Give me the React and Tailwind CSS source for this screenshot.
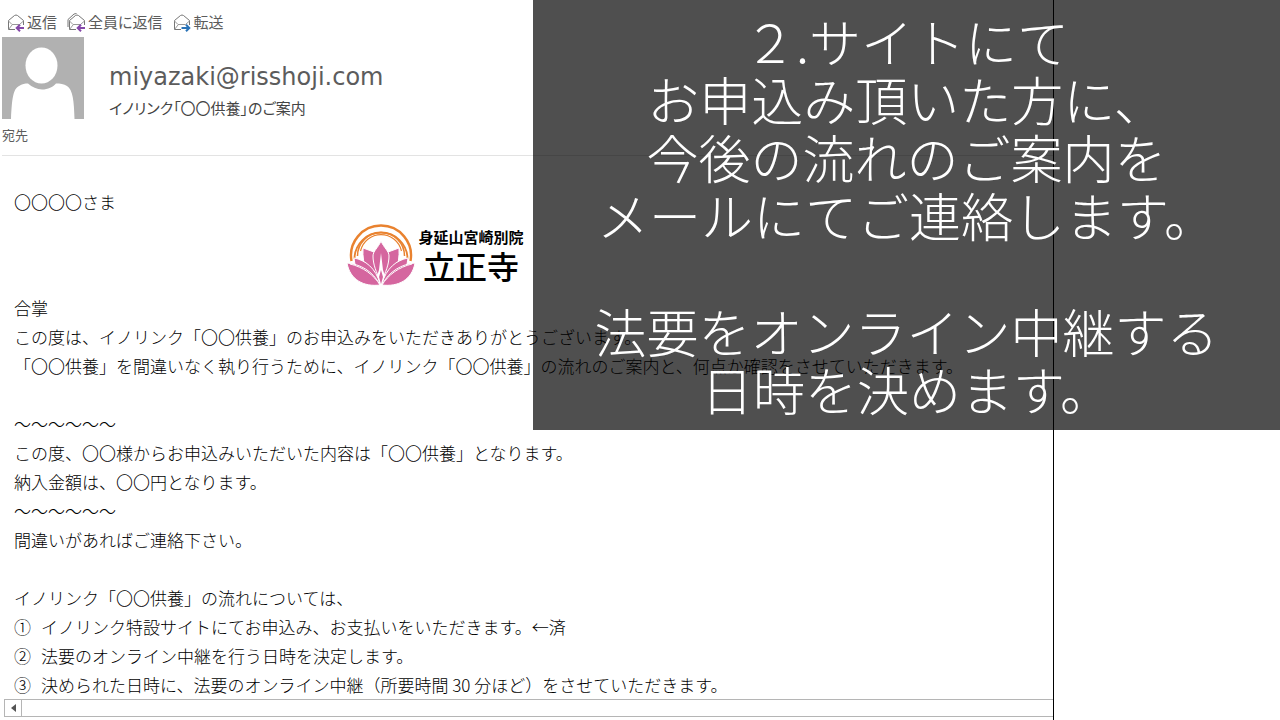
import clsx from 'clsx';

const captionLines = [
    '２.サイトにて',
    'お申込み頂いた方に、',
    '今後の流れのご案内を',
    'メールにてご連絡します。',
    '',
    '法要をオンライン中継する',
    '日時を決めます。',
];

const bodyLines = [
    '合掌',
    'この度は、イノリンク「〇〇供養」のお申込みをいただきありがとうございます。',
    '「〇〇供養」を間違いなく執り行うために、イノリンク「〇〇供養」の流れのご案内と、何点か確認をさせていただきます。',
    '',
    '～～～～～～',
    'この度、〇〇様からお申込みいただいた内容は「〇〇供養」となります。',
    '納入金額は、〇〇円となります。',
    '～～～～～～',
    '間違いがあればご連絡下さい。',
    '',
    'イノリンク「〇〇供養」の流れについては、',
];

const steps = [
    { mark: '①', text: 'イノリンク特設サイトにてお申込み、お支払いをいただきます。←済' },
    { mark: '②', text: '法要のオンライン中継を行う日時を決定します。' },
    { mark: '③', text: '決められた日時に、法要のオンライン中継（所要時間 30 分ほど）をさせていただきます。' },
];

export default function App() {
    return (
        <div className="relative min-h-screen overflow-hidden bg-white font-['Noto_Sans_CJK_JP',sans-serif]">
            <main className="flex min-h-screen w-[82.35%] flex-col border-r border-black">
                <MailHeader />
                <MailBody />
                <ScrollBar />
            </main>
            <Caption />
        </div>
    );
}

function MailHeader() {
    return (
        <header className="ml-0.5 border-b border-[#e3e3e3] pt-3 text-[#5c5c5c]">
            <nav className="flex h-5 items-center gap-2.5 pl-1">
                <MailAction label="返信" kind="reply" />
                <MailAction label="全員に返信" kind="replyAll" />
                <MailAction label="転送" kind="forward" />
            </nav>
            <div className="mt-[5px] flex items-start gap-[25px]">
                <Avatar />
                <div className="pt-6">
                    <h1 className="font-['DejaVu_Sans',sans-serif] text-[24px] leading-8">miyazaki@risshoji.com</h1>
                    <p className="text-[15px] leading-[30px] text-[#444] [font-feature-settings:'palt']">
                        イノリンク「〇〇供養」のご案内
                    </p>
                </div>
            </div>
            <p className="pb-2 text-[13px] leading-6">宛先</p>
        </header>
    );
}

function MailAction({ label, kind }) {
    return (
        <button type="button" className="flex items-center gap-0.5 text-[15px] leading-5 [font-feature-settings:'palt']">
            <EnvelopeIcon kind={kind} />
            {label}
        </button>
    );
}

function EnvelopeIcon({ kind }) {
    return (
        <svg width="19" height="20" viewBox="0 0 19 20" fill="none" aria-hidden="true">
            {kind === 'replyAll' && <path d="M1 15V7.500L7 2L9.500 1.500" stroke="#777" />}
            <path d="M9 17.500H2.500V8.500L8.500 3.500Q10 2.500 11.500 3.500L17.500 8.500V13" stroke="#777" />
            <path d="M2.500 9L6 12.500H13.500L17.500 9" stroke="#999" />
            <path d="M2.500 17.500L6 13" stroke="#999" />
            <path
                d={kind === 'forward' ? 'M9.5 16H17M14 12.7L17.3 16L14 19.3' : 'M18 16H11M14 12.7L10.7 16L14 19.3'}
                stroke={kind === 'forward' ? '#2b74b8' : '#8548a8'}
                strokeWidth="2"
            />
        </svg>
    );
}

function Avatar() {
    return (
        <svg width="82" height="82" viewBox="0 0 82 82" aria-hidden="true">
            <rect width="82" height="82" fill="#b1b1b1" />
            <ellipse cx="39.5" cy="28.5" rx="16" ry="18" fill="#fff" />
            <path d="M9 82C10 62 11 52 17 49C20 47 23 46.500 26 46.500C30 50 35 52.500 40 52.500C46 52.500 51 50 54 46.500C58 46.500 62 47 65 49C71 53 72 64 72.500 82Z" fill="#fff" />
        </svg>
    );
}

function MailBody() {
    return (
        <article className="pt-[31px] pl-3.5 text-[17px] leading-[29px] font-light whitespace-nowrap text-black">
            <p>〇〇〇〇さま</p>
            <TempleLogo />
            {bodyLines.map((line, idx) => (
                <p key={idx} className="h-[29px]">{line}</p>
            ))}
            <ol>
                {steps.map((step) => (
                    <li key={step.mark} className="flex gap-2.5">
                        <span>{step.mark}</span>
                        <span>{step.text}</span>
                    </li>
                ))}
            </ol>
        </article>
    );
}

function TempleLogo() {
    return (
        <div className="flex h-[77px] w-[842px] items-center justify-center gap-0.5 text-black">
            <svg width="70" height="62" viewBox="0 0 70 62" fill="none" aria-hidden="true">
                <g stroke="#e9822f">
                    <path d="M5.500 37A30 30 0 1 1 64.500 37" strokeWidth="2.400" />
                    <path d="M8.500 35A26.500 26.500 0 1 1 61.500 35" strokeWidth="1.800" />
                    <path d="M11.500 32A23.500 23.500 0 0 1 58.500 32" strokeWidth="1.500" />
                    <path d="M14.500 27A21 21 0 0 1 55.500 27" strokeWidth="1.200" />
                </g>
                <g fill="#d5669f" stroke="#fff" strokeWidth="1">
                    <path d="M17 24L28 28L34 59C22 54 16 42 17 24Z" />
                    <path d="M53 24L42 28L36 59C48 54 54 42 53 24Z" />
                    <path d="M35 17C38 24 43 27 43 32C43 40 40 48 35 58C30 48 27 40 27 32C27 27 32 24 35 17Z" />
                    <path d="M8 34C19 36 30 44 34 60C19 59 9 48 8 34Z" />
                    <path d="M62 34C51 36 40 44 36 60C51 59 61 48 62 34Z" />
                    <path d="M1 39C14 40 27 47 34 61C18 63 4 56 1 39Z" />
                    <path d="M69 39C56 40 43 47 36 61C52 63 66 56 69 39Z" />
                    <path d="M4 40C17 43 28 51 34 61M66 40C53 43 42 51 36 61" />
                </g>
                <path d="M35 29L37 46L39 52L35 61L31 52L33 46Z" fill="#fff" />
                <path d="M35 46L37 53L35 60L33 53Z" fill="#d5669f" />
            </svg>
            <div className="flex flex-col items-center">
                <span className="text-[15px] leading-5 font-bold">身延山宮崎別院</span>
                <span className="text-[32px] leading-9 font-medium">立正寺</span>
            </div>
        </div>
    );
}

function ScrollBar() {
    return (
        <div className="ml-1 flex h-[18px] border border-r-0 border-[#b5b5b5]">
            <button type="button" aria-label="左へスクロール" className="flex w-[17px] items-center justify-center border-r border-[#b5b5b5]">
                <svg width="5" height="8" viewBox="0 0 5 8" aria-hidden="true">
                    <path d="M5 0V8L0 4Z" fill="#555" />
                </svg>
            </button>
        </div>
    );
}

function Caption() {
    return (
        <aside className="absolute top-0 right-0 w-[58.36%] bg-black/69 pt-3 pb-3 text-center text-[52px] leading-[58px] font-light whitespace-nowrap text-white">
            {captionLines.map((line, idx) => (
                <p key={idx} className={clsx(!line && 'h-[58px]')}>{line}</p>
            ))}
        </aside>
    );
}
